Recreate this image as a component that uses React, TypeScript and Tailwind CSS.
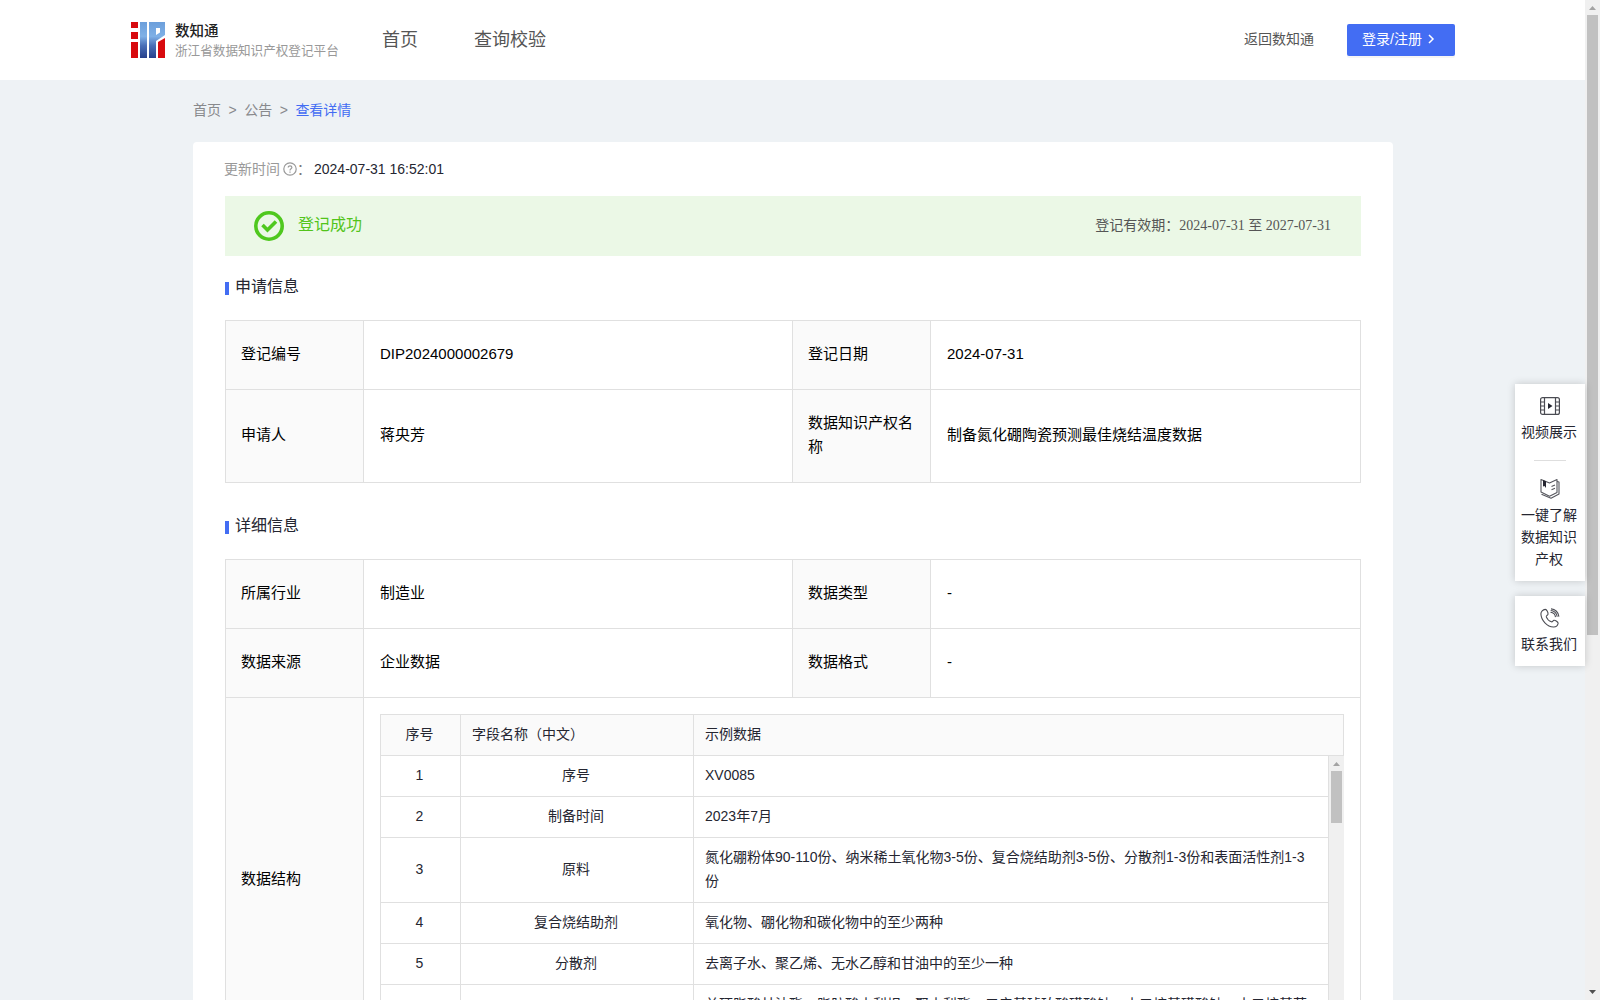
import type { ReactNode } from 'react';

type Field = { label: string; value: string };

const applyRows: Field[][] = [
  [
    { label: '登记编号', value: 'DIP2024000002679' },
    { label: '登记日期', value: '2024-07-31' },
  ],
  [
    { label: '申请人', value: '蒋央芳' },
    { label: '数据知识产权名称', value: '制备氮化硼陶瓷预测最佳烧结温度数据' },
  ],
];

const detailRows: Field[][] = [
  [
    { label: '所属行业', value: '制造业' },
    { label: '数据类型', value: '-' },
  ],
  [
    { label: '数据来源', value: '企业数据' },
    { label: '数据格式', value: '-' },
  ],
];

const structure = [
  { name: '序号', sample: 'XV0085' },
  { name: '制备时间', sample: '2023年7月' },
  { name: '原料', sample: '氮化硼粉体90-110份、纳米稀土氧化物3-5份、复合烧结助剂3-5份、分散剂1-3份和表面活性剂1-3份' },
  { name: '复合烧结助剂', sample: '氧化物、硼化物和碳化物中的至少两种' },
  { name: '分散剂', sample: '去离子水、聚乙烯、无水乙醇和甘油中的至少一种' },
  {
    name: '表面活性剂',
    sample: '单硬脂酸甘油酯、脂肪酸山梨坦、聚山梨酯、二辛基琥珀酸磺酸钠、十二烷基磺酸钠、十二烷基苯磺酸钠中的至少一种',
  },
];

const Logo = () => (
  <svg width="34" height="36" viewBox="0 0 34 36" className="shrink-0">
    <defs>
      <linearGradient id="logoBlue" x1="0" y1="0" x2="0" y2="36" gradientUnits="userSpaceOnUse">
        <stop offset="0" stopColor="#6c9fdb" />
        <stop offset="0.4" stopColor="#7fb0e6" />
        <stop offset="0.65" stopColor="#4a70b8" />
        <stop offset="1" stopColor="#27408b" />
      </linearGradient>
    </defs>
    <path d="M0 0h7v6H0zM0 10h7v7H0zM0 20h7v16H0z" fill="#d80a0e" />
    <path d="M9 0h7v36H9z" fill="url(#logoBlue)" />
    <path d="M18 0h16v13l-9 6v17h-7zM25 6v7l4-2.500V6z" fill="url(#logoBlue)" fillRule="evenodd" />
    <path d="M27 20l7-4v20h-7z" fill="#d80a0e" />
  </svg>
);

const SectionTitle = ({ children }: { children: ReactNode }) => (
  <h2 className="flex h-6 items-center text-base text-[#252631]">
    <span className="mt-[3px] mr-1.5 h-[13px] w-1 bg-[#436df3]" />
    {children}
  </h2>
);

const InfoRow = ({ fields, className }: { fields: Field[]; className: string }) => (
  <tr className={className}>
    {fields.map((field) => [
      <th key={field.label} className="border border-[#e0e0e0] bg-[#fafafa] pr-4 pb-0.5 pl-[15px] text-left font-normal">
        {field.label}
      </th>,
      <td key={`${field.label}-value`} className="border border-[#e0e0e0] px-4 pb-0.5">
        {field.value}
      </td>,
    ])}
  </tr>
);

const InfoColumns = () => (
  <colgroup>
    <col className="w-[138px]" />
    <col className="w-[429px]" />
    <col className="w-[138px]" />
    <col />
  </colgroup>
);

const StructureColumns = () => (
  <colgroup>
    <col className="w-20" />
    <col className="w-[233px]" />
    <col />
  </colgroup>
);

const ScrollArrow = ({ down = false }: { down?: boolean }) => (
  <svg width="15" height="15" viewBox="0 0 15 15" className="shrink-0">
    <path d={down ? 'M4 5h7L7.5 9z' : 'M4 10h7L7.5 6z'} fill={down ? '#505050' : '#a3a3a3'} />
  </svg>
);

const StructureTable = () => (
  <div className="w-[964px] text-sm leading-6 text-[#252631]">
    <table className="w-full table-fixed border-collapse">
      <StructureColumns />
      <thead>
        <tr className="h-[41px] bg-[#fafafa]">
          <th className="border border-[#e0e0e0] pr-0.5 pb-0.5 font-normal">序号</th>
          <th className="border border-[#e0e0e0] pb-0.5 pl-[11px] text-left font-normal">字段名称（中文）</th>
          <th className="border border-[#e0e0e0] pb-0.5 pl-[11px] text-left font-normal">示例数据</th>
        </tr>
      </thead>
    </table>
    <div className="flex h-[287px] overflow-hidden">
      <table className="-mt-px h-fit w-[949px] shrink-0 table-fixed border-collapse">
        <StructureColumns />
        <tbody>
          {structure.map((row, index) => (
            <tr key={row.name} className="h-[41px]">
              <td className="border border-[#e0e0e0] pt-[7px] pr-0.5 pb-[9px] text-center">{index + 1}</td>
              <td className="border border-[#e0e0e0] pt-[7px] pr-0.5 pb-[9px] text-center">{row.name}</td>
              <td className="border border-[#e0e0e0] pt-[7px] pr-3 pb-[9px] pl-[11px]">{row.sample}</td>
            </tr>
          ))}
        </tbody>
      </table>
      <div className="flex w-[15px] flex-col items-center bg-[#f0f0f0]">
        <ScrollArrow />
        <div className="h-[52px] w-[11px] bg-[#c1c1c1]" />
      </div>
    </div>
  </div>
);

const Header = () => (
  <header className="flex h-20 items-center bg-white pl-[131px] pr-[130px]">
    <Logo />
    <div className="mt-0.5 ml-[10px] w-[164px]">
      <p className="text-[14.5px] leading-5 font-medium text-[#222]">数知通</p>
      <p className="text-[12.6px] leading-5 whitespace-nowrap text-[#999]">浙江省数据知识产权登记平台</p>
    </div>
    <nav className="ml-[43px] flex gap-14 text-lg text-[#555]">
      <a>首页</a>
      <a>查询校验</a>
    </nav>
    <a className="ml-auto pb-0.5 text-sm text-[#555]">返回数知通</a>
    <button className="ml-[33px] flex h-8 w-[108px] items-center rounded-[2px] bg-[#436df3] pb-0.5 pl-[15px] text-sm text-white shadow-[0_2px_0_rgba(0,0,0,0.04)]">
      登录/注册
      <svg width="8" height="10" viewBox="0 0 8 10" className="ml-1.5" fill="none" stroke="currentColor" strokeWidth="1.5">
        <path d="M1 1l4 4-4 4" />
      </svg>
    </button>
  </header>
);

const FilmIcon = () => (
  <svg width="20" height="18" viewBox="0 0 20 18" fill="none" stroke="#4a4b52" strokeWidth="1.2">
    <rect x="0.6" y="0.6" width="18.8" height="16.8" rx="2" />
    <path d="M4.5 1v16M15.5 1v16M1 5h3.5M1 9h3.5M1 13h3.5M15.5 5H19M15.5 9H19M15.5 13H19" />
    <path d="M8 6v6l4.5-3z" fill="#252631" stroke="none" />
  </svg>
);

const BookIcon = () => (
  <svg width="20" height="21" viewBox="0 0 20 21" fill="none" stroke="#55565d" strokeWidth="1.1" strokeLinejoin="round">
    <path d="M9.500 5L1 1.500V14l8.500 4.200 7.500-3.700V1.500z" />
    <path d="M17 3.500l2 .5v12l-8 4.200-9.500-4M11.500 8.500l3.500-1.500M11.500 11.800l3.500-1.500" />
    <path d="M3 2v6.500L4.500 8 6 10V3.300z" fill="#252631" stroke="none" />
  </svg>
);

const PhoneIcon = () => (
  <svg width="20" height="20" viewBox="0 0 20 20" fill="none" stroke="#4a4b52" strokeWidth="1.1">
    <path d="M5.2 1.4C3 1.6.8 3.600.9 6c.3 6.500 6.200 12.600 12.600 13 2.400.1 4.200-1.700 4.600-3.600.2-1.300-2.800-3.300-4.200-3.100-1 .2-1.300 1.900-2.500 1.500C9.300 13.200 7 10.800 6.300 8.900c-.4-1.200 1.400-1.700 1.700-2.600C8.300 5 6.800 1.300 5.200 1.400z" />
    <path d="M10.500 4.200c2.600.2 4.700 2.200 5 4.900M11 .9c4.200.2 7.600 3.500 7.900 7.700M10.700 2.500c3.500.1 6.200 2.900 6.500 6.300" />
  </svg>
);

const SideMenu = () => (
  <aside className="absolute top-[384px] right-[15px] w-[70px] text-center text-sm leading-[22px] text-[#252631]">
    <div className="flex h-[197px] flex-col items-center bg-white pt-[13px] shadow-[0_0_8px_rgba(0,0,0,0.18)]">
      <FilmIcon />
      <p className="mt-1.5 pr-0.5">视频展示</p>
      <div className="mt-[17px] h-px w-8 bg-[#dedede]" />
      <div className="mt-[17px]">
        <BookIcon />
      </div>
      <p className="mt-[5px] mr-0.5 w-14">一键了解数据知识产权</p>
    </div>
    <div className="mt-[15px] flex h-[70px] flex-col items-center bg-white pt-3 shadow-[0_0_8px_rgba(0,0,0,0.18)]">
      <PhoneIcon />
      <p className="mt-[5px] pr-0.5">联系我们</p>
    </div>
  </aside>
);

const PageScrollbar = () => (
  <div className="flex w-[15px] shrink-0 flex-col items-center bg-[#f0f0f0]">
    <ScrollArrow />
    <div className="h-[620px] w-[11px] bg-[#c1c1c1]" />
    <div className="mt-auto">
      <ScrollArrow down />
    </div>
  </div>
);

export default function App() {
  return (
    <div className="relative flex h-[1000px] w-[1600px] overflow-hidden bg-[#eef2f5] font-['Liberation_Sans','Noto_Sans_CJK_SC',sans-serif]">
      <div className="min-w-0 flex-1">
        <Header />
        <main className="ml-[193px] w-[1200px]">
          <nav className="flex h-[62px] items-center gap-[7.500px] pb-0.5 text-sm text-[#88898c]">
            <a>首页</a>
            <span>&gt;</span>
            <a>公告</a>
            <span>&gt;</span>
            <a className="text-[#436df3]">查看详情</a>
          </nav>

          <div className="rounded-t bg-white px-8 pt-4">
            <div className="flex h-[22px] items-center text-sm text-[#252631]">
              <span className="-ml-px pb-px text-[#999]">更新时间</span>
              <svg width="14" height="14" viewBox="0 0 14 14" className="ml-[3px]" fill="none" stroke="#999" strokeWidth="1.2">
                <circle cx="7" cy="7" r="6.2" />
                <path d="M5.200 5.600c0-2.500 3.700-2.300 3.700-.1C8.900 6.700 7 6.800 7 8.400M7 9.500v1.200" />
              </svg>
              <span className="w-[17px] text-[#777]">：</span>
              2024-07-31 16:52:01
            </div>

            <div className="mt-4 flex h-[60px] items-center bg-[#ebf8e6] pr-[30px] pl-[29px]">
              <svg width="30" height="30" viewBox="0 0 30 30" fill="none" stroke="#4fc81e">
                <circle cx="15" cy="15" r="13.200" strokeWidth="3.600" />
                <path d="M8.500 14l5 5 8.500-8.500" strokeWidth="3.600" />
              </svg>
              <span className="ml-[14px] pb-0.5 text-base text-[#52c41a]">登记成功</span>
              <span className="ml-auto pb-px font-['Liberation_Serif','Noto_Sans_CJK_SC',serif] text-sm text-[#555]">
                登记有效期：2024-07-31 至 2027-07-31
              </span>
            </div>

            <div className="mt-[19px]">
              <SectionTitle>申请信息</SectionTitle>
            </div>
            <table className="mt-[21px] w-[1136px] table-fixed border-collapse text-[15px] leading-6 text-black">
              <InfoColumns />
              <tbody>
                <InfoRow fields={applyRows[0]} className="h-[69px]" />
                <InfoRow fields={applyRows[1]} className="h-[93px]" />
              </tbody>
            </table>

            <div className="mt-[31px]">
              <SectionTitle>详细信息</SectionTitle>
            </div>
            <table className="mt-[21px] w-[1136px] table-fixed border-collapse text-[15px] leading-6 text-black">
              <InfoColumns />
              <tbody>
                <InfoRow fields={detailRows[0]} className="h-[69px]" />
                <InfoRow fields={detailRows[1]} className="h-[69px]" />
                <tr>
                  <th className="border border-[#e0e0e0] bg-[#fafafa] pr-4 pl-[15px] text-left font-normal">数据结构</th>
                  <td colSpan={3} className="border border-[#e0e0e0] p-4 align-top">
                    <StructureTable />
                  </td>
                </tr>
              </tbody>
            </table>
          </div>
        </main>
      </div>
      <PageScrollbar />
      <SideMenu />
    </div>
  );
}
